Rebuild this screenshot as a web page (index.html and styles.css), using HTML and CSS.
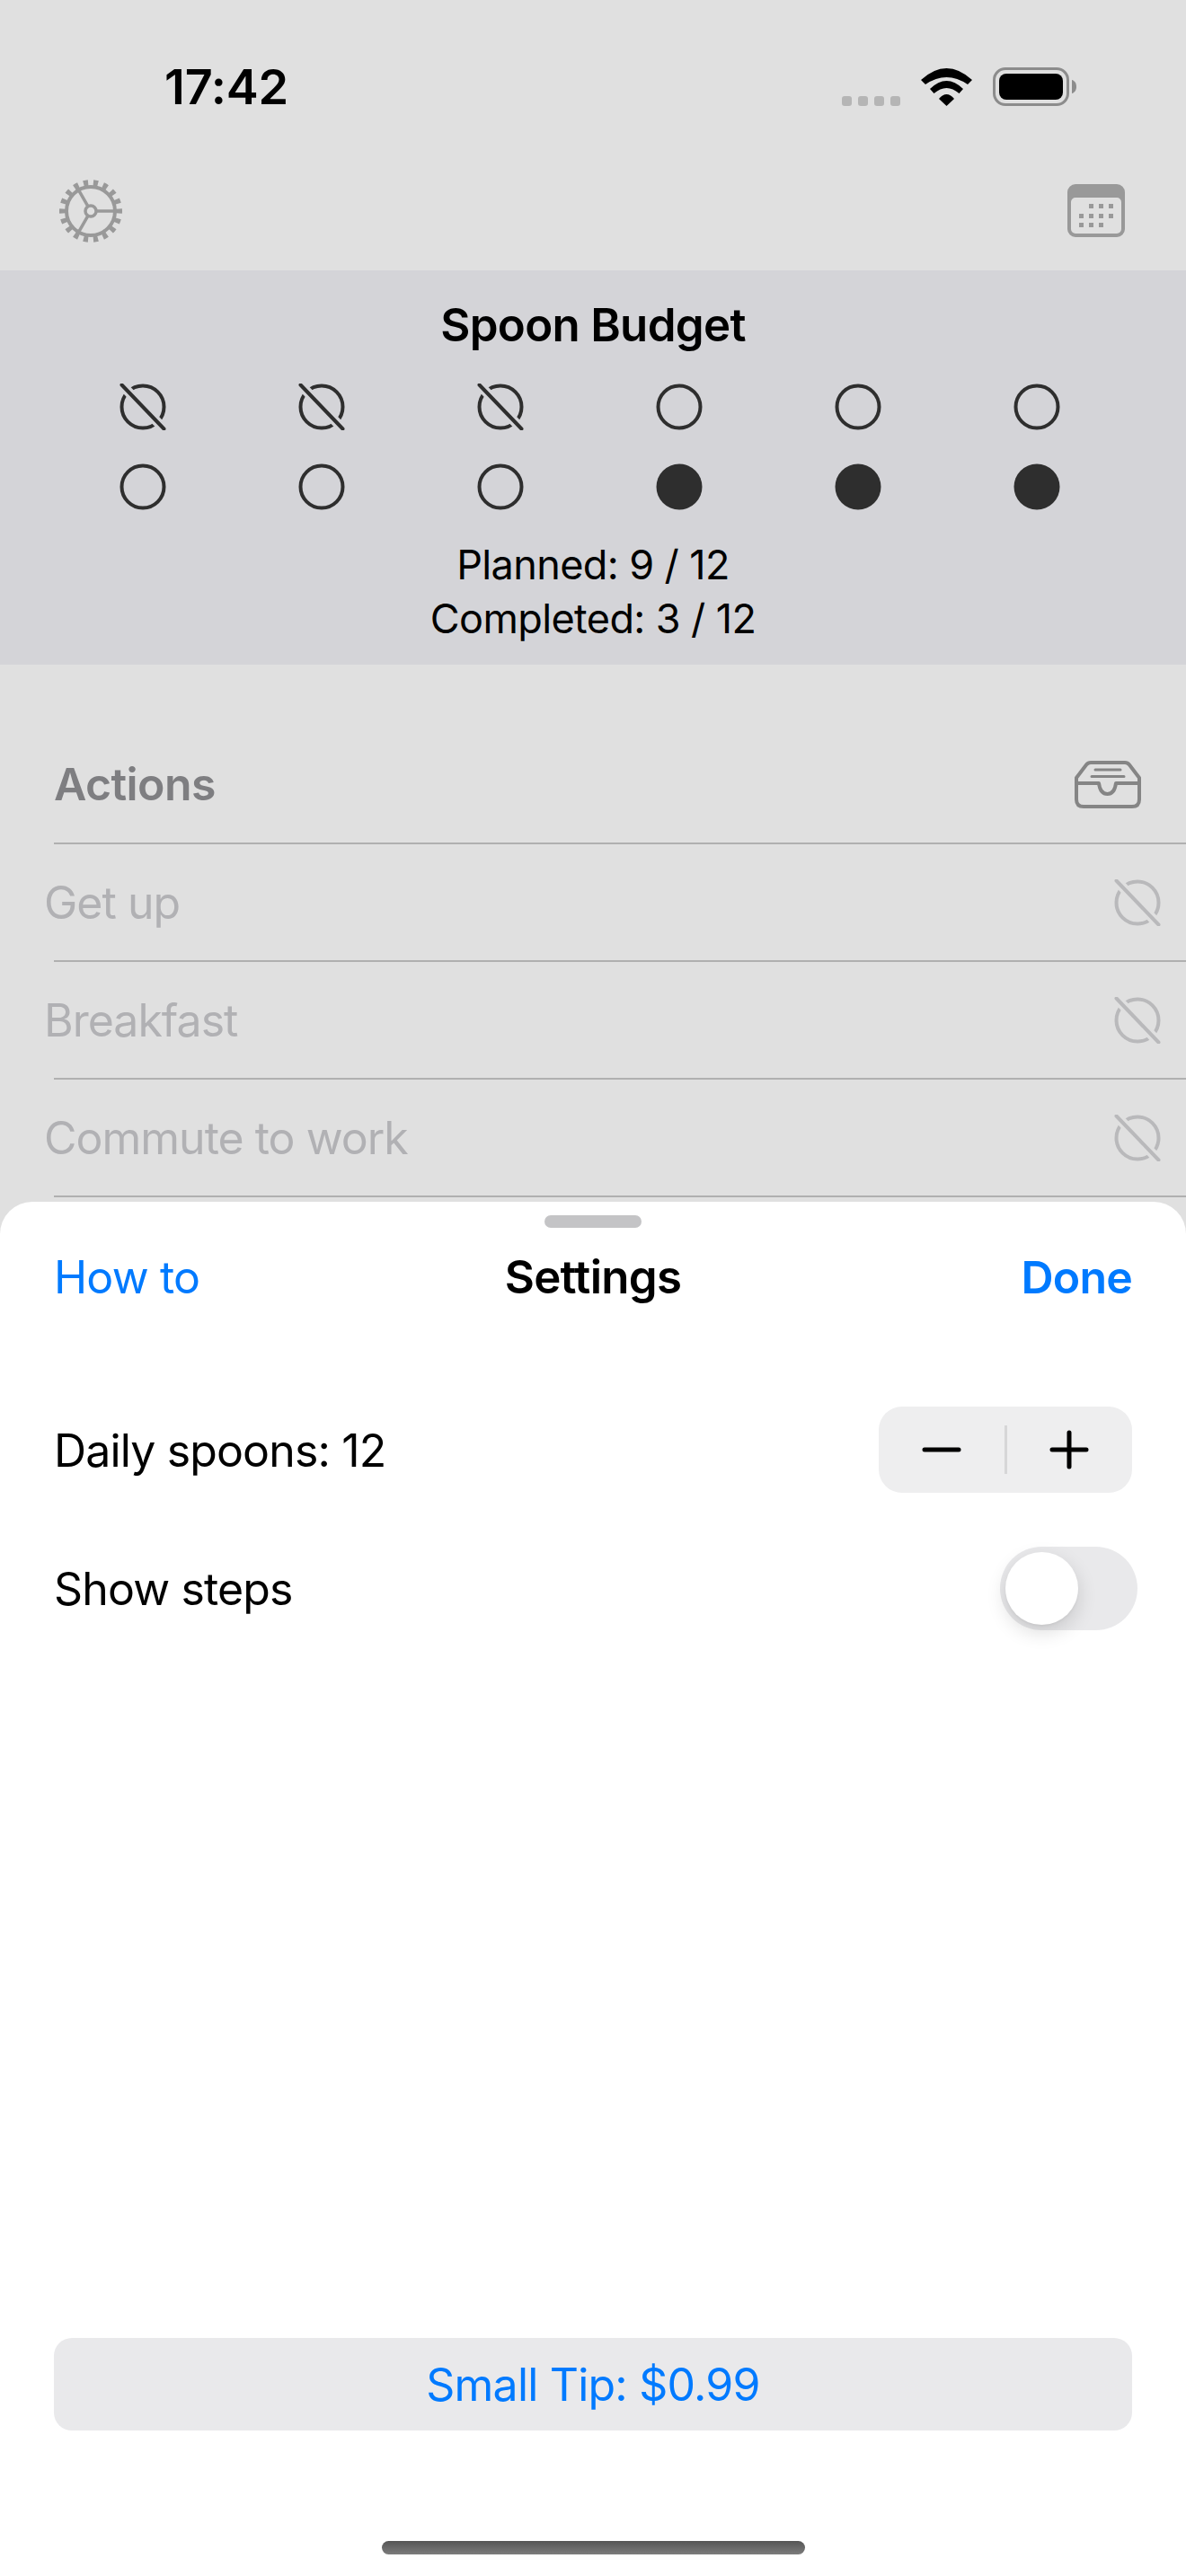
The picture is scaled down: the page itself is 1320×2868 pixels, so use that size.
FILE: index.html
```html
<!DOCTYPE html>
<html lang="en">
<head>
<meta charset="utf-8">
<title>Settings</title>
<link rel="stylesheet" href="styles.css">
</head>
<body>
<svg class="defs" width="0" height="0" aria-hidden="true">
  <defs>
    <mask id="slash-gap" maskUnits="userSpaceOnUse" x="0" y="0" width="52" height="52">
      <rect width="52" height="52" fill="#fff"/>
      <line x1="2" y1="1" x2="50" y2="51" stroke="#000" stroke-width="11"/>
    </mask>
    <symbol id="spoon-used" viewBox="0 0 52 52">
      <circle cx="26" cy="26" r="23.5" fill="none" stroke="currentColor" stroke-width="4" mask="url(#slash-gap)"/>
      <line x1="2.5" y1="1.5" x2="49.5" y2="50.5" stroke="currentColor" stroke-width="4" stroke-linecap="round"/>
    </symbol>
    <symbol id="spoon-free" viewBox="0 0 52 52">
      <circle cx="26" cy="26" r="23.5" fill="none" stroke="currentColor" stroke-width="4"/>
    </symbol>
    <symbol id="spoon-full" viewBox="0 0 52 52">
      <circle cx="26" cy="26" r="25.5" fill="currentColor"/>
    </symbol>
  </defs>
</svg>
<main class="screen">
  <header class="status">
    <span class="time">17:42</span>
    <div class="status-icons">
      <div class="signal"><i></i><i></i><i></i><i></i></div>
      <svg class="wifi" width="57" height="42" viewBox="0 0 57 42"><path d="M0 13Q28.5-13 57 13L52 18Q28.5 2 5 18ZM10 23Q28.5 5 47 23L42.5 28Q28.5 16 14.5 28ZM20 34Q28.5 24 37 34L28.5 42Z"/></svg>
      <svg class="battery" width="93" height="43" viewBox="0 0 93 43">
        <rect x="1.5" y="1.5" width="82" height="40" rx="12.5" fill="none" stroke="#8c8c8c" stroke-width="3"/>
        <rect x="7" y="7" width="71" height="29" rx="8"/>
        <path d="M88 14c3 .6 5 3.700 5 7.500s-2 6.900-5 7.500Z" fill="#8c8c8c"/>
      </svg>
    </div>
  </header>

  <nav class="toolbar">
    <svg class="gear" width="72" height="72" viewBox="0 0 72 72" fill="none" stroke="#999">
      <circle cx="36" cy="36" r="31.500" stroke-width="7" pathLength="108" stroke-dasharray="2.800 3.200" stroke-dashoffset="1.400"/>
      <circle cx="36" cy="36" r="27" stroke-width="4"/>
      <circle cx="36" cy="36" r="6" stroke-width="3.500"/>
      <path d="M42 36H63M33 30.800 22.500 12.600M33 41.200 22.500 59.400" stroke-width="3.500"/>
    </svg>
    <svg class="calendar" width="64" height="59" viewBox="0 0 64 59" fill="#999">
      <path fill-rule="evenodd" d="M9 0H55A9 9 0 0 1 64 9V50A9 9 0 0 1 55 59H9A9 9 0 0 1 0 50V9A9 9 0 0 1 9 0ZM9 15A5 5 0 0 0 4 20V50A5 5 0 0 0 9 55H55A5 5 0 0 0 60 50V20A5 5 0 0 0 55 15Z"/>
      <path d="M24 22h5v5h-5zM35 22h5v5h-5zM46 22h5v5h-5zM13 33h5v5h-5zM24 33h5v5h-5zM35 33h5v5h-5zM46 33h5v5h-5zM13 43h5v5h-5zM24 43h5v5h-5zM35 43h5v5h-5z"/>
    </svg>
  </nav>

  <section class="budget">
    <h1 class="budget-title">Spoon Budget</h1>
    <div class="spoons">
      <svg class="spoon"><use href="#spoon-used"/></svg>
      <svg class="spoon"><use href="#spoon-used"/></svg>
      <svg class="spoon"><use href="#spoon-used"/></svg>
      <svg class="spoon"><use href="#spoon-free"/></svg>
      <svg class="spoon"><use href="#spoon-free"/></svg>
      <svg class="spoon"><use href="#spoon-free"/></svg>
      <svg class="spoon"><use href="#spoon-free"/></svg>
      <svg class="spoon"><use href="#spoon-free"/></svg>
      <svg class="spoon"><use href="#spoon-free"/></svg>
      <svg class="spoon"><use href="#spoon-full"/></svg>
      <svg class="spoon"><use href="#spoon-full"/></svg>
      <svg class="spoon"><use href="#spoon-full"/></svg>
    </div>
    <p class="budget-line budget-first">Planned: 9 / 12</p>
    <p class="budget-line">Completed: 3 / 12</p>
  </section>

  <section class="actions">
    <div class="actions-head">
      <h2 class="actions-title">Actions</h2>
      <svg class="tray" width="74" height="53" viewBox="0 0 74 53" fill="none" stroke="#858585" stroke-width="4" stroke-linecap="round" stroke-linejoin="round">
        <path d="M18 2H56Q59 2 61 4.500L72 19V43Q72 51 64 51H10Q2 51 2 43V19L13 4.500Q15 2 18 2Z"/>
        <path d="M2 25H27Q28.500 37 36.500 37T46 25H72"/>
        <path d="M23 10H51M19 17.500H55" stroke-width="3"/>
      </svg>
    </div>
    <div class="action-row"><span class="action-label">Get up</span><svg class="spoon action-spoon"><use href="#spoon-used"/></svg></div>
    <div class="action-row"><span class="action-label">Breakfast</span><svg class="spoon action-spoon"><use href="#spoon-used"/></svg></div>
    <div class="action-row"><span class="action-label">Commute to work</span><svg class="spoon action-spoon"><use href="#spoon-used"/></svg></div>
  </section>

  <aside class="sheet">
    <div class="grabber"></div>
    <div class="sheet-head">
      <span class="link">How to</span>
      <strong class="sheet-title">Settings</strong>
      <span class="link link-done">Done</span>
    </div>
    <div class="setting setting-stepper">
      <span class="setting-label">Daily spoons: 12</span>
      <div class="stepper">
        <div class="step"><svg width="44" height="44" viewBox="0 0 44 44" stroke="#000" stroke-width="5" stroke-linecap="round"><path d="M3 22H41"/></svg></div>
        <div class="step-divider"></div>
        <div class="step"><svg width="44" height="44" viewBox="0 0 44 44" stroke="#000" stroke-width="5" stroke-linecap="round"><path d="M3 22H41M22 3V41"/></svg></div>
      </div>
    </div>
    <div class="setting setting-toggle">
      <span class="setting-label">Show steps</span>
      <div class="toggle"><div class="knob"></div></div>
    </div>
    <div class="tip">Small Tip: $0.99</div>
    <div class="home"></div>
  </aside>
</main>
</body>
</html>
```

FILE: styles.css
```css
* { box-sizing: border-box; }
html, body { margin: 0; padding: 0; }
body { font-family: Inter, "Liberation Sans", sans-serif; color: #000; }
.defs { position: absolute; }
h1, h2, p { margin: 0; font: inherit; }

.screen {
  position: relative;
  width: 1320px;
  height: 2868px;
  overflow: hidden;
  background: #e0e0e0;
}

/* status bar */
.status {
  display: flex;
  justify-content: space-between;
  align-items: flex-start;
  height: 168px;
  padding: 75px 122px 0 183px;
}
.time {
  font-size: 54px;
  line-height: 44px;
  font-weight: 600;
  letter-spacing: -.2px;
}
.status-icons { display: flex; align-items: flex-end; }
.signal { display: flex; gap: 7px; margin-right: 23px; }
.signal i { width: 11px; height: 11px; border-radius: 3px; background: #b5b5b5; }
.wifi { margin-right: 23px; display: block; }
.battery { display: block; }

/* toolbar */
.toolbar {
  display: flex;
  justify-content: space-between;
  align-items: center;
  height: 133px;
  padding: 0 68px 0 65px;
}

/* budget */
.budget {
  height: 439px;
  padding-top: 31px;
  background: #d4d4d8;
  text-align: center;
}
.budget-title { font-size: 51px; line-height: 60px; font-weight: 600; letter-spacing: -.7px; }
.spoons {
  display: grid;
  grid-template-columns: repeat(6, 199px);
  row-gap: 37px;
  justify-items: center;
  margin: 35px 0 0 59px;
}
.spoon { display: block; width: 52px; height: 52px; color: #2e2e2e; }
.budget-line { font-size: 45px; line-height: 60px; letter-spacing: -.6px; }
.budget-first { margin-top: 31px; }

/* list */
.actions { margin: 68px 0 0 60px; }
.actions-head {
  display: flex;
  justify-content: space-between;
  align-items: center;
  height: 132px;
  padding-right: 50px;
  border-bottom: 2px solid #b0b0b0;
}
.actions-title { font-size: 50px; font-weight: 600; color: #7e7e81; letter-spacing: -.6px; }
.action-row {
  display: flex;
  justify-content: space-between;
  align-items: center;
  height: 131px;
  padding-right: 28px;
  border-bottom: 2px solid #b0b0b0;
}
.action-label { margin-left: -11px; padding-top: 1px; font-size: 50px; color: #b1b1b4; letter-spacing: -1px; }
.action-spoon { color: #b9b9bb; }

/* sheet */
.sheet {
  position: absolute;
  top: 1338px;
  left: 0;
  right: 0;
  bottom: 0;
  display: flex;
  flex-direction: column;
  padding: 15px 60px 24px;
  background: #fff;
  border-radius: 36px 36px 0 0;
}
.grabber {
  align-self: center;
  width: 108px;
  height: 14px;
  border-radius: 7px;
  background: #c4c4c6;
}
.sheet-head {
  display: grid;
  grid-template-columns: 1fr auto 1fr;
  align-items: center;
  height: 60px;
  margin-top: 24px;
  font-size: 50px;
  letter-spacing: -.8px;
}
.link { color: #007aff; }
.link-done { font-weight: 600; text-align: right; }
.sheet-title { font-size: 51px; font-weight: 600; letter-spacing: -.7px; }

.setting {
  display: flex;
  justify-content: space-between;
  align-items: center;
}
.setting-stepper { margin-top: 115px; }
.setting-toggle { margin: 60px -6px 0 0; }
.setting-label { padding-top: 1px; font-size: 50px; letter-spacing: -.85px; }

.stepper {
  display: flex;
  align-items: center;
  width: 282px;
  height: 96px;
  border-radius: 26px;
  background: #eeeeef;
}
.step { flex: 1; display: flex; justify-content: center; align-items: center; }
.step svg { display: block; }
.step-divider { width: 3px; height: 54px; background: #d6d6d7; }

.toggle {
  width: 153px;
  height: 93px;
  padding: 6px;
  border-radius: 47px;
  background: #e9e9eb;
}
.knob {
  width: 81px;
  height: 81px;
  border-radius: 50%;
  background: #fff;
  box-shadow: 0 8px 22px rgba(0, 0, 0, .14), 0 2px 3px rgba(0, 0, 0, .04);
}

.tip {
  display: flex;
  justify-content: center;
  align-items: center;
  height: 103px;
  margin-top: auto;
  border-radius: 20px;
  background: #e9e9eb;
  color: #007aff;
  font-size: 50px;
  letter-spacing: -.8px;
}
.home {
  align-self: center;
  width: 471px;
  height: 15px;
  margin-top: 123px;
  border-radius: 8px;
  background: linear-gradient(#555, #7c7c7c);
}
```
